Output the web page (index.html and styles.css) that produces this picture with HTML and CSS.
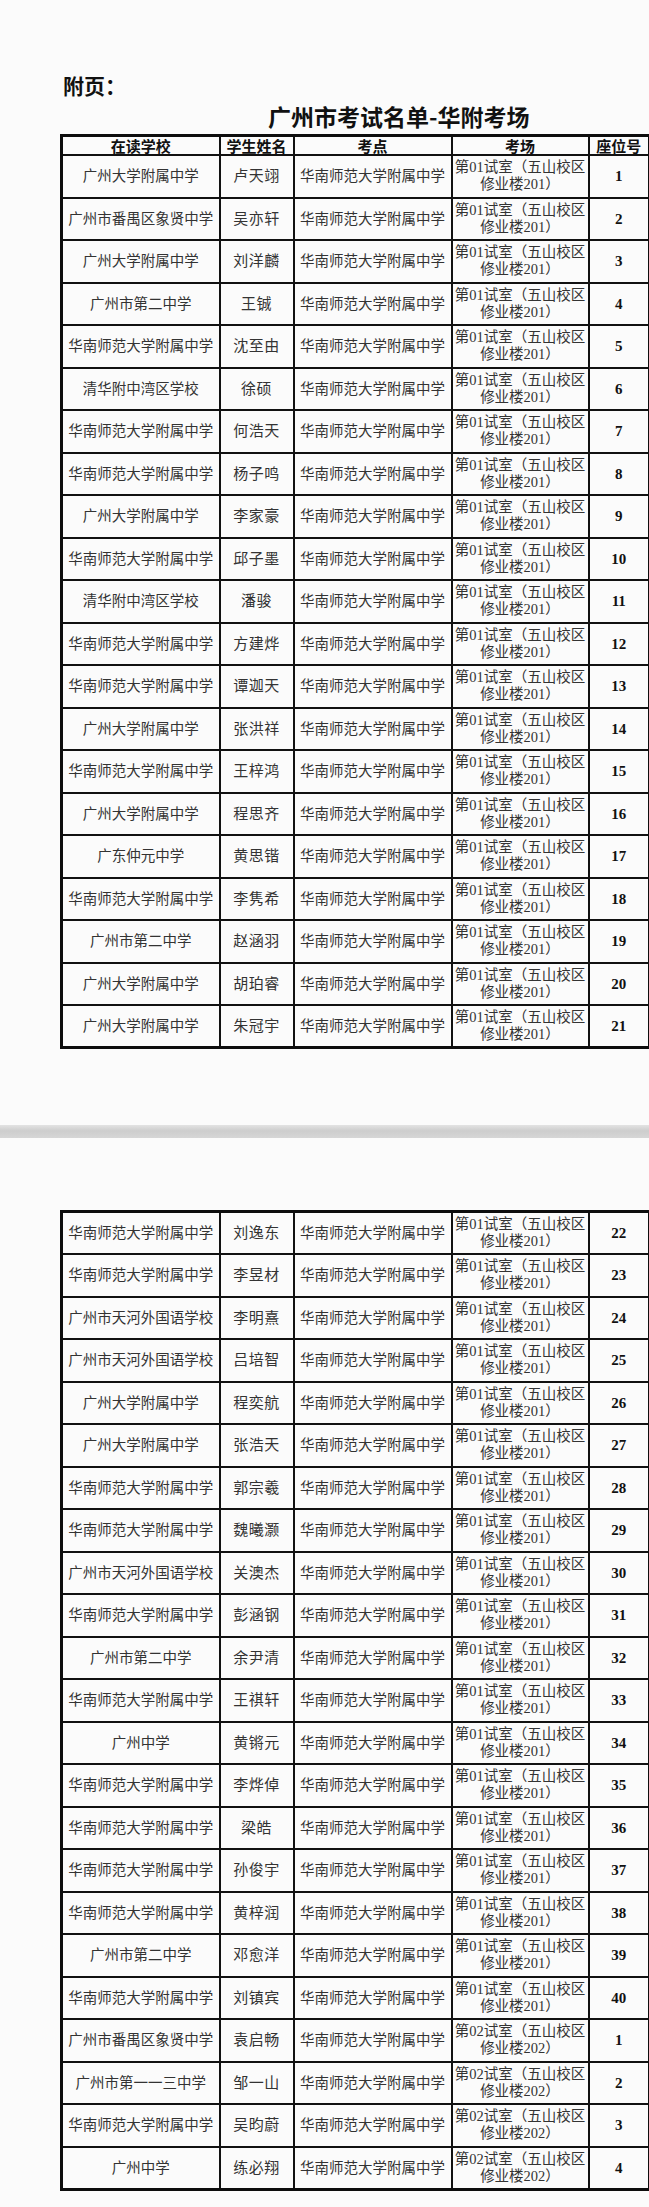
FILE: index.html
```html
<!DOCTYPE html>
<html lang="zh-CN">
<head>
<meta charset="utf-8">
<title>广州市考试名单-华附考场</title>
<link rel="stylesheet" href="styles.css">
</head>
<body>
<section class="sheet sheet-first">
  <div class="appendix">附页：</div>
  <h1 class="title">广州市考试名单-华附考场</h1>
  <table class="roster">
    <colgroup>
      <col class="c-school"><col class="c-name"><col class="c-site"><col class="c-room"><col class="c-seat">
    </colgroup>
    <thead>
      <tr class="head"><th>在读学校</th><th>学生姓名</th><th>考点</th><th>考场</th><th>座位号</th></tr>
    </thead>
    <tbody>
      <tr><td>广州大学附属中学</td><td class="name">卢天翊</td><td>华南师范大学附属中学</td><td class="room">第01试室（五山校区<br>修业楼201）</td><td class="seat">1</td></tr>
      <tr><td>广州市番禺区象贤中学</td><td class="name">吴亦轩</td><td>华南师范大学附属中学</td><td class="room">第01试室（五山校区<br>修业楼201）</td><td class="seat">2</td></tr>
      <tr><td>广州大学附属中学</td><td class="name">刘洋麟</td><td>华南师范大学附属中学</td><td class="room">第01试室（五山校区<br>修业楼201）</td><td class="seat">3</td></tr>
      <tr><td>广州市第二中学</td><td class="name">王铖</td><td>华南师范大学附属中学</td><td class="room">第01试室（五山校区<br>修业楼201）</td><td class="seat">4</td></tr>
      <tr><td>华南师范大学附属中学</td><td class="name">沈至由</td><td>华南师范大学附属中学</td><td class="room">第01试室（五山校区<br>修业楼201）</td><td class="seat">5</td></tr>
      <tr><td>清华附中湾区学校</td><td class="name">徐硕</td><td>华南师范大学附属中学</td><td class="room">第01试室（五山校区<br>修业楼201）</td><td class="seat">6</td></tr>
      <tr><td>华南师范大学附属中学</td><td class="name">何浩天</td><td>华南师范大学附属中学</td><td class="room">第01试室（五山校区<br>修业楼201）</td><td class="seat">7</td></tr>
      <tr><td>华南师范大学附属中学</td><td class="name">杨子鸣</td><td>华南师范大学附属中学</td><td class="room">第01试室（五山校区<br>修业楼201）</td><td class="seat">8</td></tr>
      <tr><td>广州大学附属中学</td><td class="name">李家豪</td><td>华南师范大学附属中学</td><td class="room">第01试室（五山校区<br>修业楼201）</td><td class="seat">9</td></tr>
      <tr><td>华南师范大学附属中学</td><td class="name">邱子墨</td><td>华南师范大学附属中学</td><td class="room">第01试室（五山校区<br>修业楼201）</td><td class="seat">10</td></tr>
      <tr><td>清华附中湾区学校</td><td class="name">潘骏</td><td>华南师范大学附属中学</td><td class="room">第01试室（五山校区<br>修业楼201）</td><td class="seat">11</td></tr>
      <tr><td>华南师范大学附属中学</td><td class="name">方建烨</td><td>华南师范大学附属中学</td><td class="room">第01试室（五山校区<br>修业楼201）</td><td class="seat">12</td></tr>
      <tr><td>华南师范大学附属中学</td><td class="name">谭迦天</td><td>华南师范大学附属中学</td><td class="room">第01试室（五山校区<br>修业楼201）</td><td class="seat">13</td></tr>
      <tr><td>广州大学附属中学</td><td class="name">张洪祥</td><td>华南师范大学附属中学</td><td class="room">第01试室（五山校区<br>修业楼201）</td><td class="seat">14</td></tr>
      <tr><td>华南师范大学附属中学</td><td class="name">王梓鸿</td><td>华南师范大学附属中学</td><td class="room">第01试室（五山校区<br>修业楼201）</td><td class="seat">15</td></tr>
      <tr><td>广州大学附属中学</td><td class="name">程思齐</td><td>华南师范大学附属中学</td><td class="room">第01试室（五山校区<br>修业楼201）</td><td class="seat">16</td></tr>
      <tr><td>广东仲元中学</td><td class="name">黄思锴</td><td>华南师范大学附属中学</td><td class="room">第01试室（五山校区<br>修业楼201）</td><td class="seat">17</td></tr>
      <tr><td>华南师范大学附属中学</td><td class="name">李隽希</td><td>华南师范大学附属中学</td><td class="room">第01试室（五山校区<br>修业楼201）</td><td class="seat">18</td></tr>
      <tr><td>广州市第二中学</td><td class="name">赵涵羽</td><td>华南师范大学附属中学</td><td class="room">第01试室（五山校区<br>修业楼201）</td><td class="seat">19</td></tr>
      <tr><td>广州大学附属中学</td><td class="name">胡珀睿</td><td>华南师范大学附属中学</td><td class="room">第01试室（五山校区<br>修业楼201）</td><td class="seat">20</td></tr>
      <tr><td>广州大学附属中学</td><td class="name">朱冠宇</td><td>华南师范大学附属中学</td><td class="room">第01试室（五山校区<br>修业楼201）</td><td class="seat">21</td></tr>
    </tbody>
  </table>
</section>

<div class="divider"></div>

<section class="sheet sheet-second">
  <table class="roster">
    <colgroup>
      <col class="c-school"><col class="c-name"><col class="c-site"><col class="c-room"><col class="c-seat">
    </colgroup>
    <tbody>
      <tr><td>华南师范大学附属中学</td><td class="name">刘逸东</td><td>华南师范大学附属中学</td><td class="room">第01试室（五山校区<br>修业楼201）</td><td class="seat">22</td></tr>
      <tr><td>华南师范大学附属中学</td><td class="name">李昱材</td><td>华南师范大学附属中学</td><td class="room">第01试室（五山校区<br>修业楼201）</td><td class="seat">23</td></tr>
      <tr><td>广州市天河外国语学校</td><td class="name">李明熹</td><td>华南师范大学附属中学</td><td class="room">第01试室（五山校区<br>修业楼201）</td><td class="seat">24</td></tr>
      <tr><td>广州市天河外国语学校</td><td class="name">吕培智</td><td>华南师范大学附属中学</td><td class="room">第01试室（五山校区<br>修业楼201）</td><td class="seat">25</td></tr>
      <tr><td>广州大学附属中学</td><td class="name">程奕航</td><td>华南师范大学附属中学</td><td class="room">第01试室（五山校区<br>修业楼201）</td><td class="seat">26</td></tr>
      <tr><td>广州大学附属中学</td><td class="name">张浩天</td><td>华南师范大学附属中学</td><td class="room">第01试室（五山校区<br>修业楼201）</td><td class="seat">27</td></tr>
      <tr><td>华南师范大学附属中学</td><td class="name">郭宗羲</td><td>华南师范大学附属中学</td><td class="room">第01试室（五山校区<br>修业楼201）</td><td class="seat">28</td></tr>
      <tr><td>华南师范大学附属中学</td><td class="name">魏曦灏</td><td>华南师范大学附属中学</td><td class="room">第01试室（五山校区<br>修业楼201）</td><td class="seat">29</td></tr>
      <tr><td>广州市天河外国语学校</td><td class="name">关澳杰</td><td>华南师范大学附属中学</td><td class="room">第01试室（五山校区<br>修业楼201）</td><td class="seat">30</td></tr>
      <tr><td>华南师范大学附属中学</td><td class="name">彭涵钢</td><td>华南师范大学附属中学</td><td class="room">第01试室（五山校区<br>修业楼201）</td><td class="seat">31</td></tr>
      <tr><td>广州市第二中学</td><td class="name">余尹清</td><td>华南师范大学附属中学</td><td class="room">第01试室（五山校区<br>修业楼201）</td><td class="seat">32</td></tr>
      <tr><td>华南师范大学附属中学</td><td class="name">王祺轩</td><td>华南师范大学附属中学</td><td class="room">第01试室（五山校区<br>修业楼201）</td><td class="seat">33</td></tr>
      <tr><td>广州中学</td><td class="name">黄锵元</td><td>华南师范大学附属中学</td><td class="room">第01试室（五山校区<br>修业楼201）</td><td class="seat">34</td></tr>
      <tr><td>华南师范大学附属中学</td><td class="name">李烨倬</td><td>华南师范大学附属中学</td><td class="room">第01试室（五山校区<br>修业楼201）</td><td class="seat">35</td></tr>
      <tr><td>华南师范大学附属中学</td><td class="name">梁皓</td><td>华南师范大学附属中学</td><td class="room">第01试室（五山校区<br>修业楼201）</td><td class="seat">36</td></tr>
      <tr><td>华南师范大学附属中学</td><td class="name">孙俊宇</td><td>华南师范大学附属中学</td><td class="room">第01试室（五山校区<br>修业楼201）</td><td class="seat">37</td></tr>
      <tr><td>华南师范大学附属中学</td><td class="name">黄梓润</td><td>华南师范大学附属中学</td><td class="room">第01试室（五山校区<br>修业楼201）</td><td class="seat">38</td></tr>
      <tr><td>广州市第二中学</td><td class="name">邓愈洋</td><td>华南师范大学附属中学</td><td class="room">第01试室（五山校区<br>修业楼201）</td><td class="seat">39</td></tr>
      <tr><td>华南师范大学附属中学</td><td class="name">刘镇宾</td><td>华南师范大学附属中学</td><td class="room">第01试室（五山校区<br>修业楼201）</td><td class="seat">40</td></tr>
      <tr><td>广州市番禺区象贤中学</td><td class="name">袁启畅</td><td>华南师范大学附属中学</td><td class="room">第02试室（五山校区<br>修业楼202）</td><td class="seat">1</td></tr>
      <tr><td>广州市第一一三中学</td><td class="name">邹一山</td><td>华南师范大学附属中学</td><td class="room">第02试室（五山校区<br>修业楼202）</td><td class="seat">2</td></tr>
      <tr><td>华南师范大学附属中学</td><td class="name">吴昀蔚</td><td>华南师范大学附属中学</td><td class="room">第02试室（五山校区<br>修业楼202）</td><td class="seat">3</td></tr>
      <tr><td>广州中学</td><td class="name">练必翔</td><td>华南师范大学附属中学</td><td class="room">第02试室（五山校区<br>修业楼202）</td><td class="seat">4</td></tr>
    </tbody>
  </table>
</section>
</body>
</html>
```

FILE: styles.css
```css
html, body {
  margin: 0;
  padding: 0;
  background: #fbfbfb;
}

body {
  width: 649px;
  font-family: "Liberation Serif", "Noto Sans CJK SC", serif;
  color: #2a2a2a;
}

.sheet {
  padding-left: 60px;
}

.sheet-first {
  padding-top: 72px;
}

.appendix {
  margin-left: 3px;
  font-family: "Noto Sans CJK SC", sans-serif;
  font-weight: 700;
  font-size: 21px;
  line-height: 26px;
  color: #111;
}

.title {
  margin: 4px 0 4px 0;
  padding-left: 208px;
  font-family: "Noto Sans CJK SC", sans-serif;
  font-weight: 700;
  font-size: 23px;
  line-height: 28px;
  color: #111;
  white-space: nowrap;
}

.roster {
  width: 588px;
  table-layout: fixed;
  border-collapse: collapse;
  border: 3px solid #0d0d0d;
}

.c-school { width: 158px; }
.c-name { width: 74px; }
.c-site { width: 158px; }
.c-room { width: 137px; }
.c-seat { width: 61px; }

.roster th,
.roster td {
  border: 2px solid #111;
  padding: 0;
  text-align: center;
  vertical-align: middle;
  white-space: nowrap;
  overflow: hidden;
}

.roster th {
  font-family: "Noto Sans CJK SC", sans-serif;
  font-weight: 700;
  font-size: 15px;
  line-height: 17px;
  color: #111;
}

.roster .head {
  height: 19px;
}

.roster tbody tr {
  height: 42.5px;
}

.roster td {
  font-size: 14.5px;
  line-height: 18px;
  color: #333;
}

.roster td.name {
  font-size: 15px;
  letter-spacing: 0.5px;
}

.roster td.room {
  font-size: 14.5px;
  line-height: 17px;
}

.roster td.seat {
  font-weight: 700;
  font-size: 15px;
  color: #111;
}

.divider {
  height: 13px;
  margin-top: 76px;
  margin-bottom: 72px;
  background: linear-gradient(#e3e3e3, #cdcdcd 45%, #d6d6d6);
}
```
